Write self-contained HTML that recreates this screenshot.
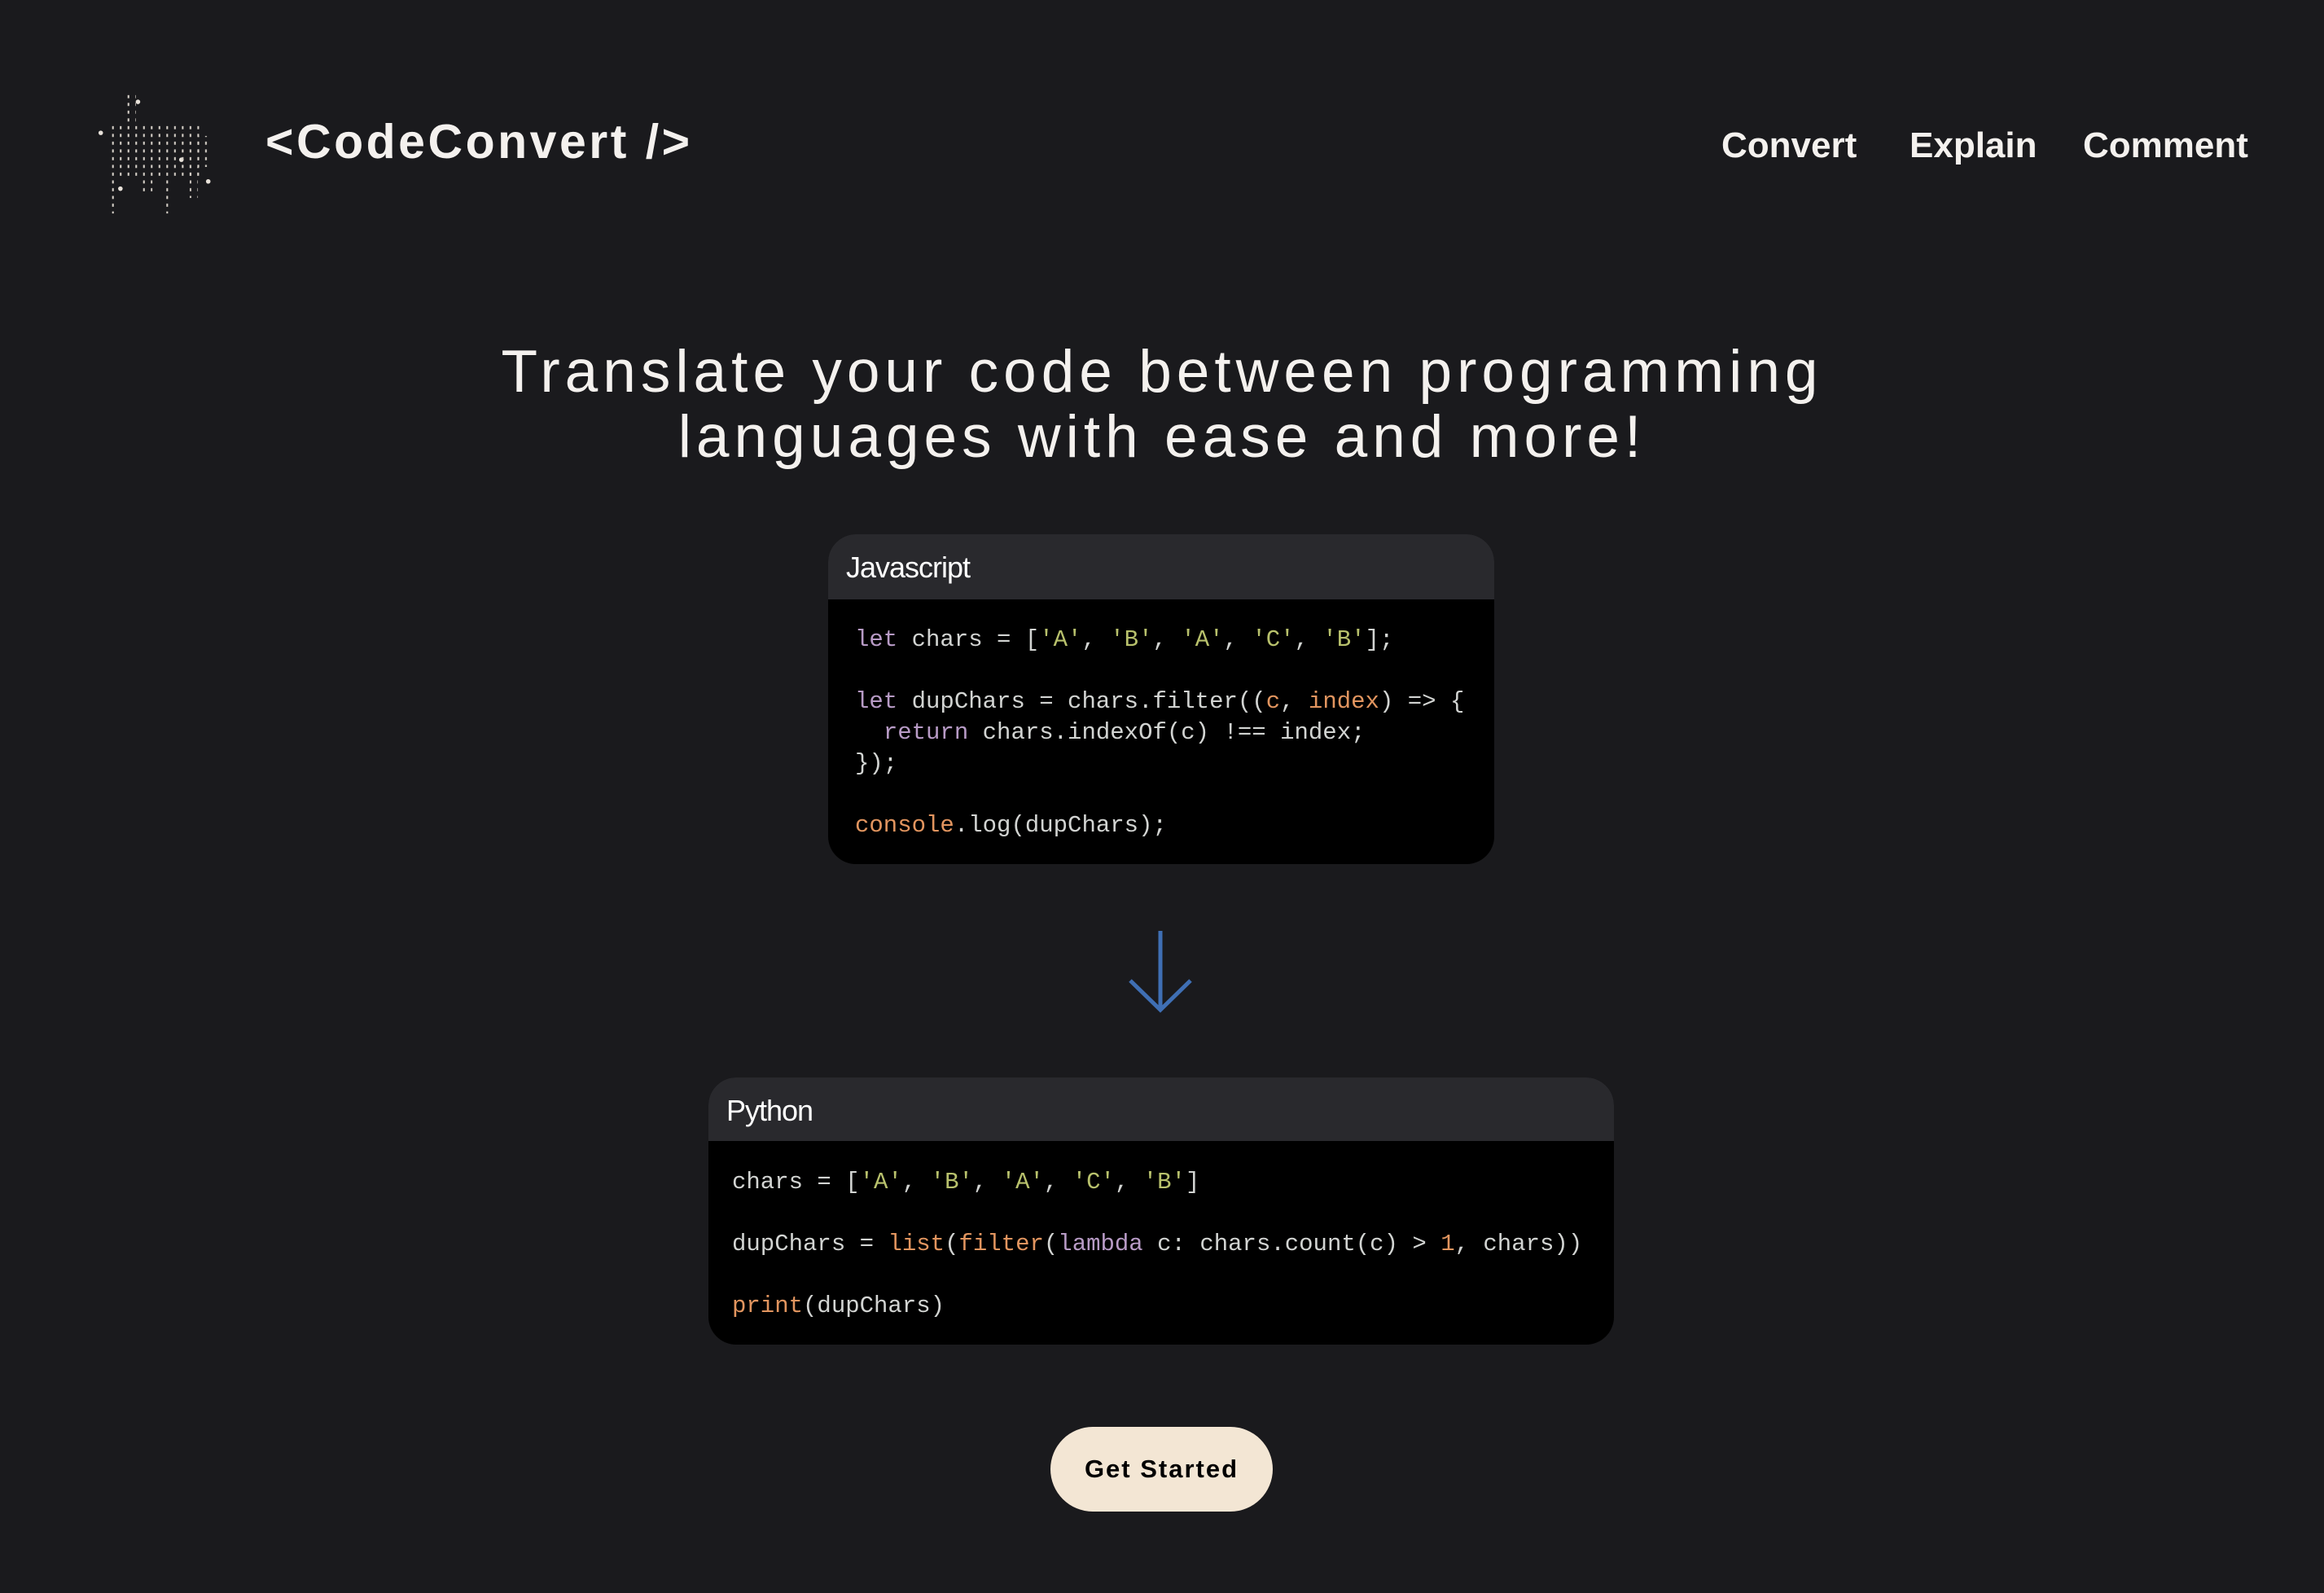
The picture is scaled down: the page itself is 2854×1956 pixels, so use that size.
<!DOCTYPE html>
<html><head><meta charset="utf-8"><style>
*{margin:0;padding:0;box-sizing:border-box}
body{width:2854px;height:1956px;background:#1a1a1d;position:relative;overflow:hidden;font-family:"Liberation Sans",sans-serif;color:#f4f1ee}
.abs{position:absolute;white-space:nowrap}
.nav{font-weight:bold;font-size:44px;top:154px}
.h1{left:0;width:2854px;text-align:center;font-size:73px;letter-spacing:6px;line-height:80px;top:417px}
.box{position:absolute;background:#000;border-radius:34px;overflow:hidden}
.hd{background:#29292d;height:80px;font-size:36px;padding-left:22px;line-height:82px;color:#fff;letter-spacing:-1px}
pre{font-family:"Liberation Mono",monospace;font-size:29px;line-height:38px;color:#d2d4d2;position:absolute}
.k{color:#b89bc6}.s{color:#b8c16c}.o{color:#e2955f}
.btn{position:absolute;left:1290px;top:1752px;width:273px;height:104px;border-radius:52px;background:#f3e6d4;color:#000;font-weight:bold;font-size:31px;letter-spacing:2px;text-align:center;line-height:104px}
</style></head><body>
<svg class="abs" style="left:116px;top:106px" width="216" height="165" viewBox="0 0 170 130">
<g fill="#e8e2da">
<circle cx="6" cy="45" r="2.2"/><circle cx="42" cy="15" r="2.2"/><circle cx="84" cy="71" r="2.2"/><circle cx="25" cy="99" r="2.2"/><circle cx="110" cy="92" r="2.2"/>
</g>
<defs><pattern id="p" width="7.5" height="7.5" patternUnits="userSpaceOnUse"><rect x="2" y="1" width="1.6" height="3" fill="#d8d2ca"/></pattern></defs>
<rect x="14" y="35" width="90" height="55" fill="url(#p)"/>
<rect x="100" y="48" width="14" height="30" fill="url(#p)"/>
<rect x="30" y="8" width="10" height="30" fill="url(#p)"/>
<rect x="14" y="88" width="8" height="35" fill="url(#p)"/>
<rect x="68" y="88" width="8" height="35" fill="url(#p)"/>
<rect x="44" y="90" width="12" height="12" fill="url(#p)"/>
<rect x="92" y="78" width="8" height="30" fill="url(#p)"/>
</svg>
<div class="abs" style="left:326px;top:140px;font-size:59px;font-weight:bold;letter-spacing:3.5px">&lt;CodeConvert /&gt;</div>
<div class="abs nav" style="left:2114px">Convert</div>
<div class="abs nav" style="left:2345px">Explain</div>
<div class="abs nav" style="left:2558px">Comment</div>
<div class="abs h1">Translate your code between programming<br>languages with ease and more!</div>

<div class="box" style="left:1017px;top:656px;width:818px;height:405px">
<div class="hd">Javascript</div>
<pre style="left:33px;top:111px"><span class="k">let</span> chars = [<span class="s">'A'</span>, <span class="s">'B'</span>, <span class="s">'A'</span>, <span class="s">'C'</span>, <span class="s">'B'</span>];

<span class="k">let</span> dupChars = chars.filter((<span class="o">c</span>, <span class="o">index</span>) =&gt; {
  <span class="k">return</span> chars.indexOf(c) !== index;
});

<span class="o">console</span>.log(dupChars);</pre>
</div>

<svg class="abs" style="left:1385px;top:1140px" width="80" height="105" viewBox="0 0 80 105"><path d="M40 3V100M3 64L40 100L77 64" fill="none" stroke="#3f6fb4" stroke-width="5"/></svg>

<div class="box" style="left:870px;top:1323px;width:1112px;height:328px">
<div class="hd" style="height:78px">Python</div>
<pre style="left:29px;top:110px;line-height:38px">chars = [<span class="s">'A'</span>, <span class="s">'B'</span>, <span class="s">'A'</span>, <span class="s">'C'</span>, <span class="s">'B'</span>]

dupChars = <span class="o">list</span>(<span class="o">filter</span>(<span class="k">lambda</span> c: chars.count(c) &gt; <span class="o">1</span>, chars))

<span class="o">print</span>(dupChars)</pre>
</div>

<div class="btn">Get Started</div>
</body></html>
